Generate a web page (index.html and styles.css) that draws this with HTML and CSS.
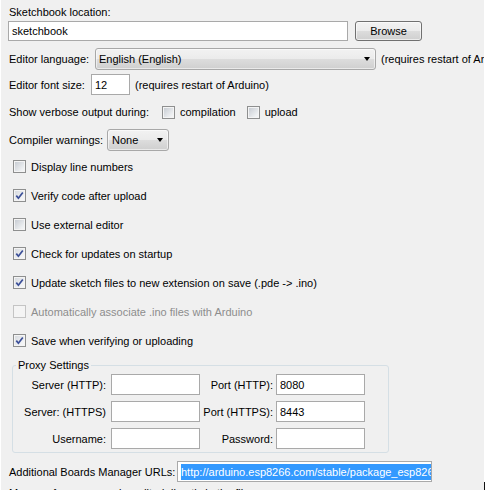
FILE: index.html
```html
<!DOCTYPE html>
<html>
<head>
<meta charset="utf-8">
<link rel="stylesheet" href="styles.css">
</head>
<body>
<div class="panel">
  <div class="caption">Sketchbook location:</div>
  <div class="row row-path">
    <div class="field field-path">sketchbook</div>
    <div class="button">Browse</div>
  </div>
  <div class="row row-lang">
    <span class="label">Editor language:</span>
    <div class="combo combo-lang"><span class="combo-text">English (English)</span><span class="arrow"></span></div>
    <span class="note">(requires restart of Arduino)</span>
  </div>
  <div class="row row-font">
    <span class="label">Editor font size:</span>
    <div class="field field-size">12</div>
    <span class="note">(requires restart of Arduino)</span>
  </div>
  <div class="row row-verbose">
    <span class="label">Show verbose output during:</span>
    <span class="cb"></span><span class="cb-label">compilation</span>
    <span class="cb cb-upload"></span><span class="cb-label">upload</span>
  </div>
  <div class="row row-warn">
    <span class="label">Compiler warnings:</span>
    <div class="combo combo-warn"><span class="combo-text">None</span><span class="arrow"></span></div>
  </div>
  <div class="checks">
    <div class="check-row"><span class="cb"></span><span class="cb-label">Display line numbers</span></div>
    <div class="check-row"><span class="cb checked"><svg viewBox="0 0 11 11" width="11" height="11"><path d="M2.3 5.6 L4.4 8.2 L8.8 2.4" fill="none" stroke="#3b4f98" stroke-width="1.7"/></svg></span><span class="cb-label">Verify code after upload</span></div>
    <div class="check-row"><span class="cb"></span><span class="cb-label">Use external editor</span></div>
    <div class="check-row"><span class="cb checked"><svg viewBox="0 0 11 11" width="11" height="11"><path d="M2.3 5.6 L4.4 8.2 L8.8 2.4" fill="none" stroke="#3b4f98" stroke-width="1.7"/></svg></span><span class="cb-label">Check for updates on startup</span></div>
    <div class="check-row"><span class="cb checked"><svg viewBox="0 0 11 11" width="11" height="11"><path d="M2.3 5.6 L4.4 8.2 L8.8 2.4" fill="none" stroke="#3b4f98" stroke-width="1.7"/></svg></span><span class="cb-label">Update sketch files to new extension on save (.pde -&gt; .ino)</span></div>
    <div class="check-row disabled"><span class="cb"></span><span class="cb-label">Automatically associate .ino files with Arduino</span></div>
    <div class="check-row"><span class="cb checked"><svg viewBox="0 0 11 11" width="11" height="11"><path d="M2.3 5.6 L4.4 8.2 L8.8 2.4" fill="none" stroke="#3b4f98" stroke-width="1.7"/></svg></span><span class="cb-label">Save when verifying or uploading</span></div>
  </div>
  <fieldset class="proxy">
    <legend>Proxy Settings</legend>
    <div class="proxy-grid">
      <span class="plabel">Server (HTTP):</span>
      <div class="field pfield"></div>
      <span class="plabel plabel2">Port (HTTP):</span>
      <div class="field pfield">8080</div>
      <span class="plabel">Server: (HTTPS)</span>
      <div class="field pfield"></div>
      <span class="plabel plabel2">Port (HTTPS):</span>
      <div class="field pfield">8443</div>
      <span class="plabel">Username:</span>
      <div class="field pfield"></div>
      <span class="plabel plabel2">Password:</span>
      <div class="field pfield"></div>
    </div>
  </fieldset>
  <div class="row row-url">
    <span class="label">Additional Boards Manager URLs:</span>
    <div class="field field-url"><span class="selected">http://arduino.esp8266.com/stable/package_esp8266com_index.json</span></div>
  </div>
  <div class="footer-text">More preferences can be edited directly in the file</div>
</div>
</body>
</html>
```

FILE: styles.css
```css
html {
  background: linear-gradient(#111, #111) right bottom / 1px 8px no-repeat, #ffffff;
}
body {
  margin: 0;
  font-family: "Liberation Sans", Arial, sans-serif;
  font-size: 11px;
  color: #000;
}
.panel {
  width: 476px;
  height: 490px;
  margin-left: 1px;
  padding-left: 7px;
  background: #f0f0f0;
  overflow: hidden;
  display: flex;
  flex-direction: column;
}
.caption {
  margin-top: 4px;
  height: 16px;
  line-height: 16px;
  padding-left: 1px;
  flex-shrink: 0;
}
.row {
  display: flex;
  align-items: center;
  white-space: nowrap;
  flex-shrink: 0;
}
.row > * {
  flex-shrink: 0;
}
.label {
  box-sizing: border-box;
  padding-left: 1px;
}
.field {
  box-sizing: border-box;
  background: #fff;
  border: 1px solid #a9a9a9;
  padding-left: 3px;
  display: flex;
  align-items: center;
  white-space: nowrap;
  overflow: hidden;
}
.row-path {
  margin-top: 1px;
  height: 20px;
}
.field-path {
  width: 340px;
  height: 20px;
}
.button {
  box-sizing: border-box;
  margin-left: 7px;
  width: 67px;
  height: 20px;
  border: 1px solid #707070;
  border-radius: 3px;
  background: linear-gradient(#f2f2f2 0%, #ebebeb 50%, #dddddd 50%, #cfcfcf 100%);
  box-shadow: inset 0 0 0 1px rgba(255, 255, 255, 0.6);
  display: flex;
  align-items: center;
  justify-content: center;
}
.row-lang {
  margin-top: 7px;
  height: 22px;
}
.row-lang .label {
  width: 87px;
}
.combo {
  box-sizing: border-box;
  height: 22px;
  border: 1px solid #a8a8a8;
  border-radius: 3px;
  background: linear-gradient(#f2f2f2 0%, #ebebeb 50%, #dddddd 50%, #cfcfcf 100%);
  box-shadow: inset 0 0 0 1px rgba(255, 255, 255, 0.55);
  display: flex;
  align-items: center;
  padding-left: 3px;
}
.combo-text {
  flex: 1;
}
.arrow {
  width: 0;
  height: 0;
  border-left: 3.5px solid transparent;
  border-right: 3.5px solid transparent;
  border-top: 4px solid #000;
  margin-right: 5px;
}
.combo-lang {
  width: 281px;
}
.note {
  margin-left: 5px;
}
.row-font {
  margin-top: 4px;
  height: 21px;
}
.row-font .label {
  width: 83px;
}
.field-size {
  width: 39px;
  height: 21px;
}
.row-verbose {
  margin-top: 6px;
  height: 22px;
}
.row-verbose .label {
  width: 154px;
}
.cb {
  box-sizing: border-box;
  width: 13px;
  height: 13px;
  flex-shrink: 0;
  border: 1px solid #8e8f8f;
  background: linear-gradient(135deg, #c3c8cf 0%, #eef0f2 75%, #f7f7f7 100%);
  box-shadow: inset 0 0 0 1px #f4f4f4;
  display: flex;
  align-items: center;
  justify-content: center;
}
.cb.checked {
  background: linear-gradient(135deg, #d4d8dd 0%, #f1f2f4 70%, #f8f8f8 100%);
}
.cb svg {
  display: block;
}
.cb-label {
  margin-left: 5px;
}
.cb-upload {
  margin-left: 11px;
}
.row-warn {
  margin-top: 6px;
  height: 22px;
}
.row-warn .label {
  width: 99px;
}
.combo-warn {
  width: 62px;
  padding-left: 4px;
}
.checks {
  margin-top: 1px;
  display: flex;
  flex-direction: column;
  flex-shrink: 0;
}
.check-row {
  height: 29px;
  display: flex;
  align-items: center;
  padding-left: 5px;
  white-space: nowrap;
}
.check-row.disabled {
  color: #8d8d8d;
}
.check-row.disabled .cb {
  border-color: #c4c4c4;
  background: #f4f4f4;
}
.proxy {
  margin: 3px 0 0 4px;
  width: 377px;
  box-sizing: border-box;
  padding: 2px 0 3px 0;
  border: 1px solid #d5dfe5;
  border-radius: 3px;
  min-inline-size: 0;
  flex-shrink: 0;
}
.proxy legend {
  margin-left: 3px;
  padding: 0 2px;
  line-height: 14px;
  font-size: 11px;
}
.proxy-grid {
  display: grid;
  grid-template-columns: 98px 89px 76px 89px;
  grid-auto-rows: 21px;
  row-gap: 6px;
  align-items: center;
}
.plabel {
  text-align: right;
  padding-right: 5px;
  white-space: nowrap;
}
.plabel2 {
  padding-right: 3px;
}
.pfield {
  height: 21px;
}
.row-url {
  margin-top: 8px;
  height: 21px;
}
.row-url .label {
  width: 169px;
}
.field-url {
  width: 255px;
  height: 21px;
}
.selected {
  background: #3399ff;
  color: #fff;
  line-height: 16px;
}
.footer-text {
  margin-top: 4px;
  line-height: 14px;
  padding-left: 1px;
  white-space: nowrap;
  flex-shrink: 0;
}
```
